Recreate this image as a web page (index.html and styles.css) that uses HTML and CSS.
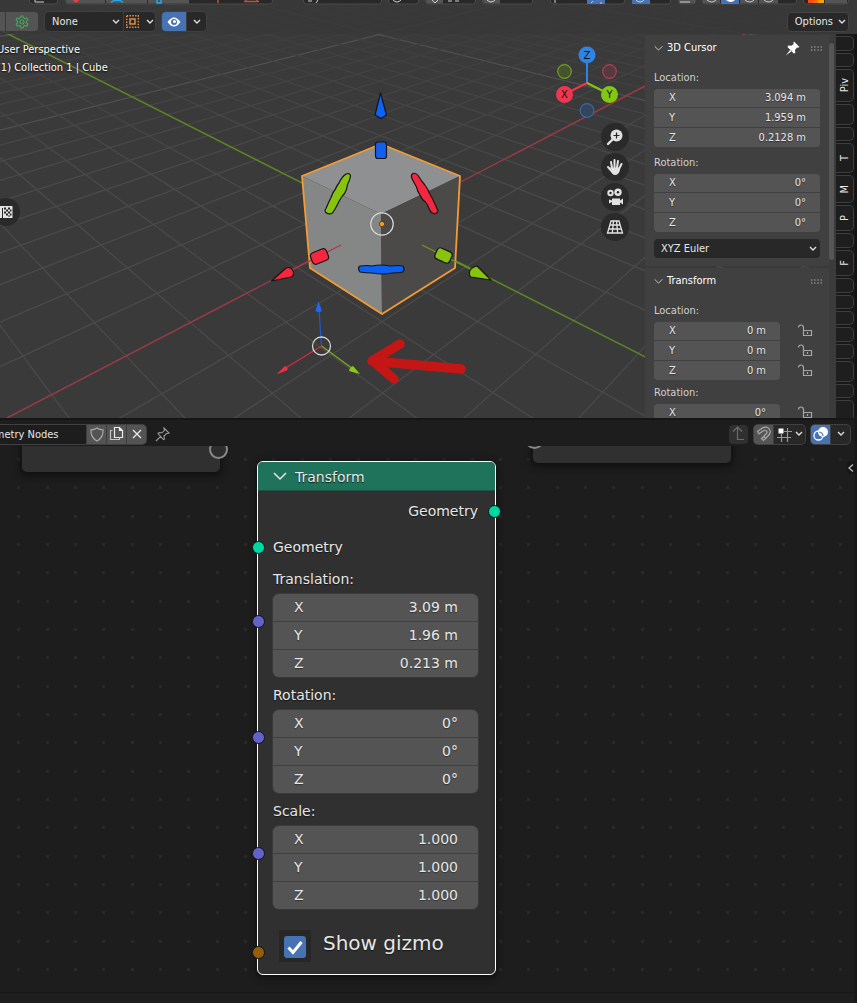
FILE: index.html
```html
<!DOCTYPE html>
<html lang="en">
<head>
<meta charset="utf-8">
<title>Geometry Nodes</title>
<link rel="stylesheet" href="styles.css">
</head>
<body>
<svg class="defs" aria-hidden="true">
  <symbol id="chev" viewBox="0 0 8 6"><path d="M1 1l3 3 3-3" fill="none" stroke="currentColor" stroke-width="1.4"/></symbol>
  <symbol id="chevbig" viewBox="0 0 14 9"><path d="M1 1l6 6 6-6" fill="none" stroke="currentColor" stroke-width="1.5"/></symbol>
  <symbol id="lock" viewBox="0 0 16 14"><path d="M6.500 6.500h8v5h-8zM6.500 6V3.500a2.500 2.500 0 0 0-5 0M10.500 8v2" fill="none" stroke="#a6a6a6" stroke-width="1.200"/></symbol>
  <symbol id="grip" viewBox="0 0 11 5"><path d="M0 1h11M0 4h11" stroke="#8f8f8f" stroke-width="1.300" stroke-dasharray="1.300 1.900"/></symbol>
</svg>
<main class="app">
<section class="viewport" aria-label="3D viewport">
  <svg class="scene" viewBox="0 0 857 418" preserveAspectRatio="xMinYMin slice" aria-hidden="true">
    <defs><linearGradient id="fade" gradientUnits="userSpaceOnUse" x1="0" y1="30" x2="0" y2="170"><stop offset="0" stop-color="#3d3d3d"/><stop offset=".5" stop-color="#444"/><stop offset="1" stop-color="#4a4a4a"/></linearGradient></defs>
    <rect width="2400" height="418" fill="#3a3a3a"/>
    <g id="floor" fill="none" stroke="url(#fade)" stroke-width="1.200"></g>
    <path d="M7 418L745 34" stroke="#973a49" stroke-width="1.500"/>
    <path d="M0 30L766 418" stroke="#5d8524" stroke-width="1.500"/>
    <path d="M381 144L460 176L381 214L302 176Z" fill="#8e9092"/>
    <path d="M302 176L381 214L382 314L310 268Z" fill="#848786"/>
    <path d="M460 176L381 214L382 314L455 268Z" fill="#4c4949"/>
    <path d="M381 144L460 176L455 268L382 314L310 268L302 176Z" fill="none" stroke="#f49b35" stroke-width="1.800" stroke-linejoin="round"/>
    <path d="M341 245L290 271" stroke="#b53548" stroke-width="1.300"/>
    <path d="M422 245L470 269" stroke="#6a9b20" stroke-width="1.300"/>
    <g stroke="#151515" stroke-width="1.200" stroke-linejoin="round">
      <path d="M380.500 93L386.500 115L381 118.500L375 115Z" fill="#0d63f5"/>
      <rect x="375.500" y="142" width="11" height="16.500" rx="2.500" fill="#1460ee"/>
      <path d="M346 174q4-1.500 4.500 2q-.5 4-3 8.500q-.5 2.500-1 5q-2 5-4.500 7q-3 4.500-4.500 8q-2.500 5-5 8.500q-3.500 2-6.500-.5q-2-1.500 0-4q2.500-6 5-11q1.500-5 4.500-8.500q1-3 3.500-6q3-6.500 7-9z" fill="#86c410"/>
      <path d="M413 173.500q3-1 5 2q3 5 6.500 9q3.500 4.500 5 9q3 5 5 9.500q2 4.500 3.500 8q-.5 3-4.500 2.500q-2.500-.5-4-4q-2-5-4-7.500q-3.500-2-5.500-7q-2.500-3.500-3.500-8q-3-5-5-9.500q-.5-3 1.500-4z" fill="#f7263f"/>
      <path d="M360 266q8-1 12 0q9-2 18 0q8-1 13 0q2 3 0 6q-5 1-11 1q-9 2-20 0q-7 0-12-1q-3-4 0-6z" fill="#0c61f4"/>
      <rect x="311" y="250.500" width="17" height="12" rx="3.500" transform="rotate(-22 319.500 256.500)" fill="#f7263f"/>
      <path d="M271.500 281L286 268Q291 266 293.500 272Q294 276 291 277Z" fill="#f7263f"/>
      <rect x="435.500" y="249.500" width="16" height="12" rx="3.500" transform="rotate(24 443.500 255.500)" fill="#86c410"/>
      <path d="M491 280L477 266Q470 268 469.500 272Q469 276 471 277Z" fill="#86c410"/>
    </g>
    <circle cx="382" cy="224" r="11.200" fill="none" stroke="#dcdcdc" stroke-width="1.200"/>
    <circle cx="382" cy="224" r="2.600" fill="#ff9b28" stroke="#4a3010" stroke-width=".8"/>
    <path d="M321.500 346L319 310" stroke="#2356cf" stroke-width="1.300"/><path d="M318.500 301.500L322 311Q319 313 315.500 311Z" fill="#1f67ff"/>
    <path d="M321.500 346L284 369" stroke="#d42c40" stroke-width="1.300"/><path d="M276.500 374.500L285 366Q288 367 287.500 370Z" fill="#fa2c44"/>
    <path d="M321.500 346L353 369" stroke="#7aad20" stroke-width="1.300"/><path d="M360 374L353 366Q350 367 349 371Z" fill="#8aca1a"/>
    <circle cx="321.500" cy="346" r="9" fill="none" stroke="#d6d6d6" stroke-width="1.300"/>
    <path d="M461 369L372 361L400 344M374 362L394 379" fill="none" stroke="#c51616" stroke-width="9.500" stroke-linecap="round" stroke-linejoin="round"/>
  </svg>

  <div class="strip"><svg width="857" height="5" aria-hidden="true">
    <g fill="#282828" stroke="#4a4a4a"><rect x="29.500" y="-8" width="28" height="12" rx="3"/><rect x="65.500" y="-8" width="207" height="12" rx="3"/><rect x="303.500" y="-8" width="78" height="12" rx="3"/><rect x="388.500" y="-8" width="30" height="12" rx="3"/><rect x="425.500" y="-8" width="50" height="12" rx="3"/><rect x="482.500" y="-8" width="50" height="12" rx="3"/><rect x="550.500" y="-8" width="74" height="12" rx="3"/><rect x="632.500" y="-8" width="38" height="12" rx="3"/><rect x="678.500" y="-8" width="17" height="12" rx="3"/><rect x="702.500" y="-8" width="94" height="12" rx="3"/><rect x="803.500" y="-8" width="45" height="12" rx="3"/></g>
    <path d="M66 0h39v3.500H67zM106 0h41v3.500h-41zM148 0h41v3.500h-41zM426 0h17v3.500h-16zM483 0h17v3.500h-16zM679 0h16v3.500h-16zM703 0h17v3.500h-17zM740 0h18v3.500h-18zM759 0h19v3.500h-19zM825 0h22v3.500h-22z" fill="#545454"/>
    <path d="M587 0h18v4h-18zM632 0h18v4h-18zM721 0h18v4h-18z" fill="#4772b3"/>
    <path d="M73 0h6l-2 2.500h-2z" fill="#f23a44"/><path d="M111 2.500l3-2h6l3 2M157 0v3h4V0" fill="none" stroke="#1eaaf0" stroke-width="1.500"/>
    <path d="M218 0v3M244 1.500h15M246 0v2M257 0v2" stroke="#b95347" stroke-width="1.500"/>
    <path d="M35 0v2h9M308 1h4M318 0l-2 3M393 0q4 4 8 0M432 0l3 3 3-3M448 1h4M455 1h4M487 0q4 4 8 0M555 0v3M591 3l2-2M600 3h2M636 0q4 4 8 0M680 2h10M707 0q5 4 9 0M745 0q5 4 9 0M764 0q5 4 9 0" fill="none" stroke="#cfcfcf"/>
    <path d="M726 0h9q-4 4-9 0z" fill="#fff"/><path d="M808 0h5v3h-5z" fill="#ff4a16"/><path d="M813 0h5v3h-5z" fill="#ff6a10"/><path d="M818 0h6v3h-6z" fill="#ffa00a"/>
  </svg></div>
  <header class="vp-header">
    <button class="btn gear-stub" aria-label="Mode"></button>
    <button class="btn gear" aria-label="Settings"><svg width="14" height="14" viewBox="0 0 14 14" fill="none" stroke="#48a35c" stroke-width="1.200"><circle cx="7" cy="7" r="2"/><path d="M6 1h2l.6 1.900 1.200.7 2-.5 1 1.800-1.400 1.500v1.300l1.400 1.500-1 1.800-2-.5-1.200.7L8 13H6l-.6-1.800-1.200-.7-2 .5-1-1.800 1.400-1.500V6.400L1.200 4.900l1-1.800 2 .5 1.200-.7z"/></svg></button>
    <div class="combo"><div class="pick pick-none"><select aria-label="Snap target"><option>None</option></select><svg class="chev"><use href="#chev"/></svg></div><button class="dark snap" aria-label="Snap elements"><svg width="13" height="13" viewBox="0 0 13 13" fill="none" stroke="#e8954b"><rect x=".7" y=".7" width="11.600" height="11.600" stroke-width="1.400" stroke-dasharray="1.400 1.400"/><rect x="4" y="4" width="5" height="5" stroke-width="1.400"/></svg><svg class="chev"><use href="#chev"/></svg></button></div>
    <div class="combo"><button class="blue eye" aria-label="Visibility"><svg width="14" height="10" viewBox="0 0 14 10"><path d="M.5 5Q7-4 13.500 5Q7 14 .5 5z" fill="#fff"/><circle cx="7" cy="5" r="3" fill="#4772b3"/><circle cx="7.500" cy="4.500" r="1.500" fill="#fff"/></svg></button><button class="dark narrow" aria-label="Visibility options"><svg class="chev"><use href="#chev"/></svg></button></div>
    <button class="dark options">Options<svg class="chev"><use href="#chev"/></svg></button>
  </header>

  <div class="vp-body">
    <div class="vp-left">
      <p>User Perspective</p><p>(1) Collection 1 | Cube</p>
      <button class="round checker" aria-label="Texture"><svg width="16" height="14" viewBox="0 0 16 14"><path d="M0 1h14.500v12H0z" fill="#e4e4e4"/><path d="M6 2.500h2v2H6zM10 2.500h2v2h-2zM8 4.500h2v2H8zM12 4.500h1.500v2H12zM6 6.500h2v2H6zM10 6.500h2v2h-2zM8 8.500h2v2H8zM12 8.500h1.500v2H12zM10 10.500h2v1h-2zM4 3v10h1V3z" fill="#252525"/></svg></button>
    </div>
    <nav class="nav" aria-label="View navigation">
      <svg width="68" height="84" viewBox="0 0 68 84" role="img" aria-label="Axes">
        <g stroke-width="2"><path d="M34 41V20" stroke="#2f83e3"/><path d="M34 41L12 52" stroke="#f0364f"/><path d="M34 41L56 52" stroke="#82c714"/></g>
        <g stroke-width="1.200"><circle cx="11.500" cy="29.500" r="6.800" fill="#45532f" stroke="#6f9f23"/><circle cx="56.500" cy="29.500" r="6.800" fill="#553a40" stroke="#b83c50"/><circle cx="34" cy="68.500" r="6.800" fill="#34455b" stroke="#3569a9"/></g>
        <circle cx="34" cy="13" r="8.500" fill="#2f83e3"/><circle cx="11.500" cy="52.500" r="8.500" fill="#f0364f"/><circle cx="56.500" cy="52.500" r="8.500" fill="#82c714"/>
        <g class="axis"><text x="34" y="17">Z</text><text x="11.500" y="56">X</text><text x="56.500" y="56">Y</text></g>
      </svg>
      <button class="round" aria-label="Zoom"><svg width="18" height="18" viewBox="0 0 18 18"><circle cx="10.500" cy="7.500" r="6" fill="#e2e2e2"/><path d="M6 12l-4 4" stroke="#e2e2e2" stroke-width="2.400" stroke-linecap="round"/><path d="M10.500 4.500v6M7.500 7.500h6" stroke="#222" stroke-width="1.200"/></svg></button>
      <button class="round" aria-label="Pan"><svg width="18" height="18" viewBox="0 0 18 18" fill="none" stroke="#e2e2e2" stroke-width="2" stroke-linecap="round"><path d="M6 10L5 4M8.500 9.500V2M11 9.500l1-6.500M13 11l2.500-5M2 9l3.500 4"/><path d="M5 10h8.500q0 7-5 6.500Q5 16 5 10z" fill="#e2e2e2" stroke-width="1"/></svg></button>
      <button class="round" aria-label="Camera"><svg width="18" height="18" viewBox="0 0 18 18"><circle cx="4.500" cy="5" r="3.200" fill="#e2e2e2"/><circle cx="12" cy="4.200" r="3.700" fill="#e2e2e2"/><circle cx="4.500" cy="5" r="1.200" fill="#262626"/><circle cx="12" cy="4.200" r="1.200" fill="#262626"/><path d="M6 10.500h8v2l3-2v6l-3-2v2.500H6v-3l-3 1.500v-4l3 1z" fill="#e2e2e2"/></svg></button>
      <button class="round" aria-label="Perspective"><svg width="18" height="16" viewBox="0 0 18 16" fill="none" stroke="#e2e2e2" stroke-width="1.300"><path d="M5 2h8l3.500 12h-15zM4 6h10M2.800 10h12.400M7.500 2L6.300 14M10.500 2l1.200 12"/></svg></button>
    </nav>
    <aside class="sidebar">
      <div class="panels">
        <section class="panel">
          <h2><svg class="tri"><use href="#chevbig"/></svg>3D Cursor<svg class="pin" viewBox="0 0 15 15"><path d="M9 .5L14.500 6l-1.500.8-1-.3-2 2.500.3 3-1.600.6L2.500 6l.8-1.500 3 .2L8.800 3 8.300 1.800zM5.500 8.500L.8 14.500 6.800 10z" fill="#fff"/></svg><svg class="grip"><use href="#grip"/></svg></h2>
          <div class="label">Location:</div>
          <div class="fields"><label>X<input value="3.094 m"></label><label>Y<input value="1.959 m"></label><label>Z<input value="0.2128 m"></label></div>
          <div class="label roomy">Rotation:</div>
          <div class="fields"><label>X<input value="0°"></label><label>Y<input value="0°"></label><label>Z<input value="0°"></label></div>
          <div class="pick euler"><select aria-label="Rotation mode"><option>XYZ Euler</option></select><svg class="chev"><use href="#chev"/></svg></div>
        </section>
        <section class="panel">
          <h2><svg class="tri"><use href="#chevbig"/></svg>Transform<svg class="grip"><use href="#grip"/></svg></h2>
          <div class="label">Location:</div>
          <div class="locked"><div class="fields"><label>X<input value="0 m"></label><label>Y<input value="0 m"></label><label>Z<input value="0 m"></label></div><div class="locks"><button aria-label="Lock X"><svg><use href="#lock"/></svg></button><button aria-label="Lock Y"><svg><use href="#lock"/></svg></button><button aria-label="Lock Z"><svg><use href="#lock"/></svg></button></div></div>
          <div class="label tight">Rotation:</div>
          <div class="locked"><div class="fields"><label>X<input value="0°"></label></div><div class="locks"><button aria-label="Lock rotation X"><svg><use href="#lock"/></svg></button></div></div>
        </section>
      </div>
      <div class="scroll"><div class="thumb"></div></div>
      <div class="tabs"><button class="s15" aria-label="Tab"></button><button class="s14" aria-label="Tab"></button><button class="s33">Piv</button><button class="s21" aria-label="Tab"></button><button class="s14" aria-label="Tab"></button><button class="s30">T</button><button class="s28">M</button><button class="s26">P</button><button class="s15" aria-label="Tab"></button><button class="s26">F</button><button class="s15" aria-label="Tab"></button><button class="s14" aria-label="Tab"></button><button class="s14" aria-label="Tab"></button><button class="s15" aria-label="Tab"></button><button class="s15" aria-label="Tab"></button><button class="s21" aria-label="Tab"></button><button class="s14" aria-label="Tab"></button><button class="s21" aria-label="Tab"></button></div>
    </aside>
  </div>
</section>

<section class="editor" aria-label="Node editor">
  <header class="ed-header">
    <div class="combo tree"><input aria-label="Node tree" value="Geometry Nodes"><button class="btn" aria-label="Fake user"><svg width="14" height="15" viewBox="0 0 14 15"><path d="M7 1Q9.500 2.800 13 2.800Q13.500 10.500 7 14Q.5 10.500 1 2.800Q4.500 2.800 7 1z" fill="none" stroke="#a8a8a8" stroke-width="1.200"/></svg></button><button class="btn" aria-label="Duplicate"><svg width="16" height="16" viewBox="0 0 16 16" fill="none" stroke="#ececec" stroke-width="1.200"><path d="M5.500 1.500h5l3 3v7h-8zM10.500 1.500v3h3"/><path d="M3.500 4.500h-2v9h9v-2" stroke="#c4c4c4"/></svg></button><button class="btn" aria-label="Unlink"><svg width="10" height="10" viewBox="0 0 10 10"><path d="M1 1l8 8M9 1L1 9" stroke="#e8e8e8" stroke-width="1.300"/></svg></button></div>
    <button class="plain" aria-label="Pin"><svg width="15" height="15" viewBox="0 0 15 15"><path d="M9 1l5 5-1.500.5-1 0L9 9l.5 3-1 .5L3 6.500l1-1 3 .3L9.500 3.300zM5.700 9.300L1 14" fill="none" stroke="#999" stroke-width="1.100"/></svg></button>
    <span class="grow"></span>
    <button class="btn up" aria-label="Parent tree"><svg width="14" height="16" viewBox="0 0 14 16"><path d="M1 5.500L5.500 1 10 5.500M5.500 1v12.500H12" fill="none" stroke="#6d6d6d" stroke-width="1.200"/></svg></button>
    <div class="combo"><button class="btn magnet" aria-label="Snap"><svg width="16" height="16" viewBox="0 0 16 16"><path d="M1.500 5.500L6 2.200Q12-.8 14 4.500Q15 8 11 11L7.500 14.500 5.500 12.500 9 9Q12 6.500 10.500 5Q9 3.500 7 5L3 7.800zM7.500 10.500l2 2" fill="none" stroke="#a8a8a8" stroke-width="1.200"/></svg></button><button class="dark gridbtn" aria-label="Snap grid"><svg width="15" height="15" viewBox="0 0 15 15"><path d="M4.500 7v8M10.500 1v14M7 4.500h8M0 10.500h14" stroke="#999" stroke-width="1.200"/><path d="M1.500 1.500h5v5h-5z" fill="#fff"/></svg><svg class="chev"><use href="#chev"/></svg></button></div>
    <div class="combo"><button class="blue overlay" aria-label="Overlays"><svg width="16" height="16" viewBox="0 0 16 16"><circle cx="5.500" cy="9.500" r="4.500" fill="none" stroke="#fff" stroke-width="1.300"/><circle cx="10" cy="6" r="5" fill="#fff"/><path d="M6 6a4.500 4.500 0 0 1 4 4" fill="none" stroke="#4772b3" stroke-width="1.200"/></svg></button><button class="dark narrow" aria-label="Overlay options"><svg class="chev"><use href="#chev"/></svg></button></div>
  </header>
  <div class="canvas">
    <svg class="dots" aria-hidden="true"><defs><pattern id="dotp" width="85" height="85" patternUnits="userSpaceOnUse"><path d="M17 12h3v3h-3zM46 12h3v3h-3zM74 12h3v3h-3zM17 40h3v3h-3zM46 40h3v3h-3zM74 40h3v3h-3zM17 69h3v3h-3zM46 69h3v3h-3zM74 69h3v3h-3z" fill="#282828"/></pattern></defs><rect width="100%" height="100%" fill="url(#dotp)"/></svg>
    <div class="stub stub-a"></div><div class="stub stub-b"></div>
    <button class="flyout" aria-label="Show sidebar"><svg width="6" height="8" viewBox="0 0 6 8"><path d="M5 .5L1 4l4 3.500" fill="none" stroke="#bbb" stroke-width="1.300"/></svg></button>
    <article class="node">
      <h1><svg><use href="#chevbig"/></svg>Transform</h1>
      <div class="node-body">
        <div class="row out">Geometry<i class="sock geo"></i></div>
        <div class="row">Geometry<i class="sock geo"></i></div>
        <div class="group"><div class="glabel">Translation:</div><div class="fields big"><label>X<input value="3.09 m"></label><label>Y<input value="1.96 m"></label><label>Z<input value="0.213 m"></label></div><i class="sock vec"></i></div>
        <div class="group"><div class="glabel">Rotation:</div><div class="fields big"><label>X<input value="0°"></label><label>Y<input value="0°"></label><label>Z<input value="0°"></label></div><i class="sock vec"></i></div>
        <div class="group"><div class="glabel">Scale:</div><div class="fields big"><label>X<input value="1.000"></label><label>Y<input value="1.000"></label><label>Z<input value="1.000"></label></div><i class="sock vec"></i></div>
        <label class="gizmo"><span class="tick"><input type="checkbox" checked><svg viewBox="0 0 22 22"><path d="M4.500 11.500l4.500 5L17.500 6" fill="none" stroke="#fff" stroke-width="3"/></svg></span>Show gizmo<i class="sock bool"></i></label>
      </div>
    </article>
  </div>
  <footer class="ed-footer"></footer>
</section>
</main>
<script src="scene.js"></script>
</body>
</html>
```
FILE: scene.js
```js
// Ground plane projected through the camera; each axis converges on its vanishing point.
const floor = document.getElementById("floor");
function project(i, j) {
  const w = 1 - 0.0524 * i - 0.0519 * j;
  return [
    (381 - 57.64 * i + 18.27 * j) / w,
    (224 + 7.7 * i + 7.63 * j) / w,
  ].map((n) => n.toFixed(1)).join(" ");
}
function addLine(a, b, major) {
  const p = document.createElementNS("http://www.w3.org/2000/svg", "path");
  p.setAttribute("d", "M" + a + "L" + b);
  if (major) p.setAttribute("class", "major");
  floor.append(p);
}
for (let k = -36; k <= 9; k++) {
  if (k === 0) continue;
  addLine(project(k, -60), project(k, (0.5 - 0.0524 * k) / 0.0519), k % 10 === 0);
  addLine(project(-60, k), project((0.5 - 0.0519 * k) / 0.0524, k), k % 10 === 0);
}
```
FILE: styles.css
```css
* { box-sizing: border-box; }
body { margin: 0; background: #161616; color: #e6e6e6; font: 11px/14px "DejaVu Sans Condensed", "DejaVu Sans", sans-serif; }
button, input, select { font: inherit; color: inherit; border: 0; margin: 0; padding: 0; background: none; outline: 0; appearance: none; border-radius: 0; min-width: 0; }
button { display: flex; align-items: center; justify-content: center; }
h1, h2, p { margin: 0; font-weight: normal; }
svg { display: block; flex: none; }
.defs { position: absolute; width: 0; height: 0; }
.app { display: flex; flex-direction: column; min-height: 100vh; }

.viewport { position: relative; display: flex; flex-direction: column; height: 418px; overflow: hidden; }
.scene { position: absolute; inset: 0; width: 100%; height: 100%; }
.major { stroke: #505050; }
.strip { position: relative; height: 5px; overflow: hidden; background: #383838; }
.vp-header { position: relative; display: flex; align-items: center; height: 29px; padding: 4px 8px 0 0; background: rgba(56, 56, 56, .85); }
.btn { height: 19px; width: 20px; background: #545454; }
.gear-stub { width: 5px; }
.gear { width: 32px; margin-left: 1px; border-radius: 0 4px 4px 0; }
.dark { height: 19px; background: #282828; }
.blue { height: 19px; background: #4772b3; }
.combo { display: flex; box-shadow: 0 0 0 1px #404040; border-radius: 4px; overflow: hidden; gap: 1px; background: #3d3d3d; }
.vp-header .combo { margin-left: 7px; }
.chev { width: 8px; height: 6px; color: #ddd; }
.pick { display: flex; align-items: center; height: 19px; padding: 0 3px 0 7px; background: #282828; }
.pick select { flex: 1; }
.pick-none { width: 78px; }
.snap { width: 31px; gap: 7px; }
.eye { width: 24px; }
.narrow { width: 19px; }
.vp-header .options { margin-left: auto; height: 20px; padding: 0 2px 0 7px; gap: 5px; border: 1px solid #444; border-radius: 4px; }

.vp-body { position: relative; display: flex; flex: 1; min-height: 0; }
.vp-left { flex: 1; min-width: 0; padding-top: 7px; margin-left: -3px; color: #fff; text-shadow: 0 1px 2px #000; white-space: nowrap; }
.vp-left p { height: 18px; line-height: 18px; }
.round { width: 28px; height: 28px; border-radius: 50%; background: #2a2a2a; }
.checker { margin: 121px 0 0 -5px; }
.nav { display: flex; flex-direction: column; align-items: center; gap: 2px; padding-top: 8px; width: 94px; }
.nav > svg { margin: 0 0 -5px -22px; }
.nav .round { margin-left: 34px; }
.axis { font-size: 11px; fill: #111; text-anchor: middle; }

.sidebar { display: flex; width: 212px; }
.panels { width: 184px; padding-top: 1px; overflow: hidden; }
.panel { padding: 0 9px 8px; margin-bottom: 2px; background: #404040; }
.panel h2 { display: flex; align-items: center; height: 26px; margin-bottom: 2px; font-size: 11px; color: #fff; }
.panel h2 .grip { width: 11px; height: 5px; margin-left: auto; margin-right: -2px; }
.tri { width: 9px; height: 7px; margin-right: 4px; color: #ccc; }
.panel h2 .pin { width: 15px; height: 15px; margin-left: auto; }
.panel h2 .pin + .grip { margin-left: 11px; }
.label { height: 26px; padding-top: 4px; line-height: 22px; color: #cfcfcf; }
.label.roomy { height: 27px; padding-top: 5px; }
.label.tight { height: 24px; padding-top: 2px; }
.fields { display: grid; gap: 1px; border-radius: 4px; overflow: hidden; background: #404040; flex: 1; }
.fields label { display: flex; align-items: center; height: 19px; padding: 0 14px 0 15px; background: #545454; text-shadow: 0 1px 1px #333; }
.fields label:first-child, .locks button:first-child { height: 18px; }
.fields input { flex: 1; text-align: right; width: 0; text-shadow: inherit; }
.euler { margin-top: 7px; border-radius: 4px; }
.locked { display: flex; }
.locks { display: grid; gap: 1px; width: 40px; }
.locks button { height: 19px; padding-left: 10px; }
.locks svg { width: 16px; height: 14px; }
.scroll { width: 7px; background: #3b3b3b; padding-top: 9px; }
.thumb { width: 5px; height: 217px; border-radius: 3px; background: #565656; }
.tabs { display: flex; flex-direction: column; gap: 2px; width: 21px; padding-top: 2px; background: #191919; border-right: 2px solid #121212; }
.tabs button { flex: none; width: 18px; border: 1px solid #3e3e3e; border-left: 0; border-radius: 0 5px 5px 0; background: #1e1e1e; writing-mode: sideways-lr; }
.s14 { height: 14px; } .s15 { height: 15px; } .s21 { height: 21px; } .s26 { height: 26px; } .s28 { height: 28px; } .s30 { height: 30px; } .s33 { height: 33px; }

.editor { display: flex; flex: 1; flex-direction: column; border-top: 2px solid #161616; border-right: 2px solid #161616; background: #1d1d1d; }
.ed-header { display: flex; align-items: center; gap: 6px; height: 26px; padding: 2px 5px 0 0; overflow: hidden; }
.ed-header .combo { flex: none; }
.tree { margin-left: -30px; }
.tree input { width: 116px; height: 19px; padding-left: 5px; background: #1d1d1d; }
.tree .btn { width: 19px; }
.plain { margin-left: 3px; }
.grow { flex: 1; }
.up { width: 19px; border-radius: 4px; background: #303030; }
.magnet { width: 19px; }
.gridbtn { width: 31px; gap: 3px; }
.overlay { width: 19px; }

.canvas { position: relative; flex: 1; overflow: hidden; padding: 15px 0 17px 257px; }
.dots { position: absolute; inset: 0; width: 100%; height: 100%; }
.stub { position: absolute; top: -20px; width: 198px; background: #303030; border-radius: 5px; box-shadow: 0 2px 6px 2px #111; }
.stub-a { left: 22px; height: 46px; }
.stub-b { left: 533px; height: 37px; }
.stub::after { content: ""; position: absolute; width: 15px; height: 15px; border: 2px solid #888; border-radius: 50%; background: #2d2d2d; }
.stub-a::after { right: -8px; bottom: 13px; }
.stub-b::after { left: -8px; bottom: 14px; }
.flyout { position: absolute; right: 0; top: 15px; width: 8px; height: 13px; background: #161616; border-radius: 4px 0 0 4px; }
.node { position: relative; width: 239px; border: 1px solid #fff; border-radius: 6px; background: #303030; box-shadow: 0 2px 6px 1px #101010; font: 14px/18px "DejaVu Sans", sans-serif; text-shadow: 0 1px 1px #161616; }
.node h1 { display: flex; align-items: center; gap: 8px; height: 29px; padding: 1px 0 0 15px; font-size: 14px; background: #1f735b; border-bottom: 1px solid #1c5545; border-radius: 5px 5px 0 0; }
.node h1 svg { width: 14px; height: 9px; }
.node-body { display: flex; flex-direction: column; padding: 6px 17px 12px 15px; }
.row { position: relative; height: 28px; line-height: 28px; margin-bottom: 8px; }
.row + .row { margin-bottom: 0; }
.out { text-align: right; }
.group { position: relative; }
.glabel { height: 33px; padding-top: 2px; line-height: 32px; }
.fields.big { border-radius: 6px; box-shadow: 0 0 0 1px #3a3a3a; }
.fields.big label { height: 27px; padding: 0 20px 2px 21px; }
.sock { position: absolute; left: -21px; width: 13px; height: 13px; border: 1px solid #161616; border-radius: 50%; }
.row .sock { top: 8px; }
.out .sock { left: auto; right: -23px; }
.group .sock { top: 54px; }
.gizmo .sock { top: 16px; }
.geo { background: #00d6a3; }
.vec { background: #6363c7; }
.bool { background: #945f08; }
.gizmo { position: relative; display: flex; gap: 12px; margin-top: 21px; padding-left: 6px; font-size: 20px; line-height: 26px; }
.tick { display: grid; place-items: center; width: 32px; height: 32px; padding-top: 2px; background: #272727; }
.tick input { grid-area: 1 / 1; width: 22px; height: 22px; background: #4772b3; border-radius: 3px; }
.tick svg { grid-area: 1 / 1; width: 22px; height: 22px; }
.ed-footer { height: 11px; border-top: 1px solid #151515; background: #1e1e1e; }
```
